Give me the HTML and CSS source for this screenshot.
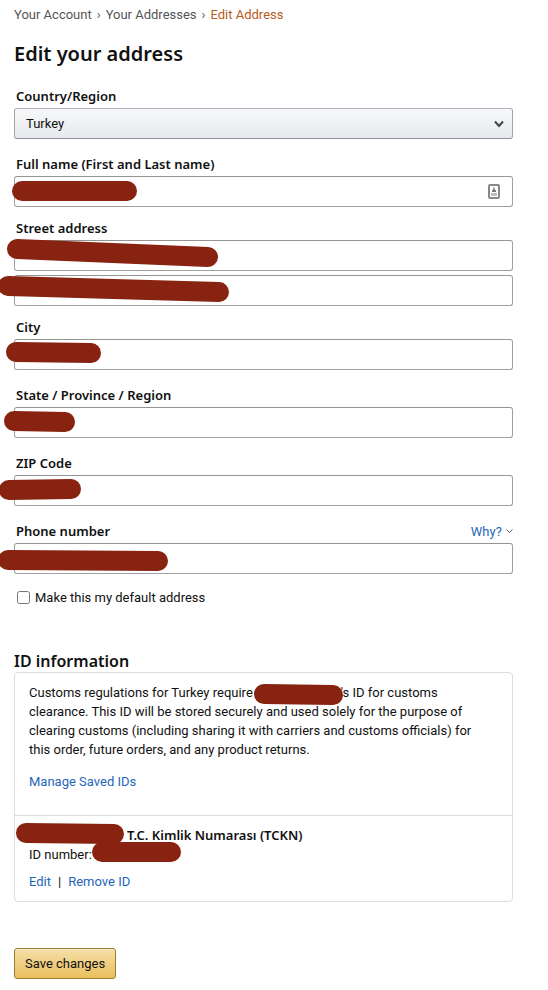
FILE: index.html
```
<!DOCTYPE html>
<html lang="en">
<head>
  <meta charset="UTF-8">
  <meta name="viewport" content="width=device-width, initial-scale=1.0">
  <title>Edit your address</title>
  <link rel="stylesheet" href="styles.css">
</head>
<body>
  <main class="page">
    <nav class="breadcrumb" aria-label="Breadcrumb">
      <a href="#">Your Account</a>
      <span class="separator">›</span>
      <a href="#">Your Addresses</a>
      <span class="separator">›</span>
      <span class="current">Edit Address</span>
    </nav>

    <h1>Edit your address</h1>

    <form>
      <div class="form-group">
        <label for="country">Country/Region</label>
        <div class="field">
          <select id="country" name="country">
            <option>Turkey</option>
          </select>
          <svg class="select-arrow" width="10" height="8" viewBox="0 0 10 8"><path d="M1 1.5L5 6L9 1.5"/></svg>
        </div>
      </div>

      <div class="form-group compact">
        <label for="fullName">Full name (First and Last name)</label>
        <div class="field">
          <input type="text" id="fullName" name="fullName">
          <svg class="contact-icon" width="12" height="16" viewBox="0 0 12 16">
            <rect class="frame" x="1" y="1" width="10" height="13" rx="1"/>
            <path d="M5.500 3H6.500V5L8 6.500V8H4V6.500L5.500 5Z"/>
            <path class="lines" d="M3 9H9V12H3Z"/>
          </svg>
          <svg class="redaction"><line x1="8" y1="15" x2="113" y2="15"/></svg>
        </div>
      </div>

      <div class="form-group compact">
        <label for="street1">Street address</label>
        <div class="field">
          <input type="text" id="street1" name="street1">
          <svg class="redaction"><line x1="3" y1="9" x2="194" y2="17"/></svg>
        </div>
        <div class="field second-line">
          <input type="text" id="street2" name="street2" aria-label="Street address line 2">
          <svg class="redaction"><line x1="-6" y1="11" x2="205" y2="17"/></svg>
        </div>
      </div>

      <div class="form-group">
        <label for="city">City</label>
        <div class="field">
          <input type="text" id="city" name="city">
          <svg class="redaction"><line x1="2" y1="13" x2="77" y2="14"/></svg>
        </div>
      </div>

      <div class="form-group">
        <label for="state">State / Province / Region</label>
        <div class="field">
          <input type="text" id="state" name="state">
          <svg class="redaction"><line x1="0" y1="14" x2="51" y2="15"/></svg>
        </div>
      </div>

      <div class="form-group">
        <label for="zip">ZIP Code</label>
        <div class="field">
          <input type="text" id="zip" name="zip">
          <svg class="redaction"><line x1="-5" y1="15" x2="57" y2="14"/></svg>
        </div>
      </div>

      <div class="form-group">
        <div class="label-row">
          <label for="phone">Phone number</label>
          <a href="#" class="why-link">Why?
            <svg width="7" height="5" viewBox="0 0 7 5"><path d="M0.500 0.500L3.500 3.500L6.500 0.500"/></svg>
          </a>
        </div>
        <div class="field">
          <input type="tel" id="phone" name="phone">
          <svg class="redaction"><line x1="-6" y1="17" x2="144" y2="18"/></svg>
        </div>
      </div>

      <div class="checkbox-row">
        <input type="checkbox" id="defaultAddress" name="defaultAddress">
        <label for="defaultAddress">Make this my default address</label>
      </div>

      <h2>ID information</h2>
      <div class="id-box">
        <section>
          <p>Customs regulations for Turkey require<span class="hidden-name"><svg class="redaction"><line x1="11" y1="7" x2="80" y2="8"/></svg></span>'s ID for customs clearance. This ID will be stored securely and used solely for the purpose of clearing customs (including sharing it with carriers and customs officials) for this order, future orders, and any product returns.</p>
          <a href="#">Manage Saved IDs</a>
        </section>
        <section>
          <div class="id-name">
            <svg class="redaction"><line x1="-3" y1="7" x2="85" y2="8"/></svg>
            <strong>T.C. Kimlik Numarası (TCKN)</strong>
          </div>
          <div class="id-number">ID number:
            <svg class="redaction"><line x1="73" y1="7" x2="142" y2="7"/></svg>
          </div>
          <div class="id-actions">
            <a href="#">Edit</a>
            <span>|</span>
            <a href="#">Remove ID</a>
          </div>
        </section>
      </div>

      <button type="submit">Save changes</button>
    </form>
  </main>
</body>
</html>
```
FILE: styles.css
```
:root {
  --text-color: #111;
  --link-color: #1f66b8;
  --muted-color: #555;
  --accent-color: #b85b22;
  --border-color: #a0a0a0;
  --box-border: #ddd;
  --redaction-color: #882211;
  --heading-font: "Noto Sans", "Open Sans", sans-serif;
}

* {
  box-sizing: border-box;
}

body {
  margin: 0;
  background: white;
  color: var(--text-color);
  font-family: Roboto, "Noto Sans", sans-serif;
  font-size: 13px;
  line-height: 19px;
}

.page {
  padding: 5px 35px 11px 14px;
}

a {
  color: var(--link-color);
  text-decoration: none;
}

a:hover {
  text-decoration: underline;
}

.breadcrumb {
  display: flex;
  gap: 5px;
}

.breadcrumb a,
.separator {
  color: var(--muted-color);
}

.breadcrumb .current {
  color: var(--accent-color);
}

h1,
h2,
strong,
.form-group label {
  font-family: var(--heading-font);
  font-weight: 600;
}

h1 {
  margin: 16px 0 19px;
  font-size: 20px;
  line-height: 28px;
}

.form-group {
  margin-bottom: 16px;
}

.form-group.compact {
  margin-bottom: 12px;
}

.form-group label {
  display: block;
  padding-left: 2px;
  margin-bottom: 2px;
}

.label-row {
  display: flex;
  justify-content: space-between;
}

.why-link svg {
  margin-left: 1px;
  vertical-align: 2px;
  fill: none;
  stroke: #666;
}

.field {
  position: relative;
}

.second-line {
  margin-top: 4px;
}

.field input,
select {
  display: block;
  width: 100%;
  height: 31px;
  padding: 0 11px;
  border: 1px solid var(--border-color);
  border-top-color: #949494;
  border-radius: 3px;
  background: white;
  color: var(--text-color);
  font: inherit;
}

select {
  appearance: none;
  border-color: #adb1b8 #a2a6ac #8d9096;
  background: linear-gradient(to bottom, #f7f8fa, #e7e9ec);
}

.select-arrow {
  position: absolute;
  top: 12px;
  right: 9px;
  fill: none;
  stroke: #444;
  stroke-width: 2;
  pointer-events: none;
}

.contact-icon {
  position: absolute;
  top: 8px;
  right: 13px;
  fill: #777;
}

.contact-icon .frame {
  fill: none;
  stroke: #888;
  stroke-width: 2;
}

.contact-icon .lines {
  fill: #bbb;
}

/* marker strokes over private details */
.redaction {
  position: absolute;
  top: 0;
  left: 0;
  width: 100%;
  height: 100%;
  overflow: visible;
  pointer-events: none;
  stroke: var(--redaction-color);
  stroke-width: 20;
  stroke-linecap: round;
}

.checkbox-row {
  display: flex;
  align-items: center;
  gap: 5px;
  padding-left: 3px;
}

.form-group + .checkbox-row {
  margin-top: -2px;
}

.checkbox-row input {
  width: 13px;
  height: 13px;
  margin: 0;
}

h2 {
  margin: 43px 0 0;
  font-size: 16px;
  line-height: 22px;
}

.id-box {
  border: 1px solid var(--box-border);
  border-radius: 4px;
}

.id-box section {
  padding: 10px 14px;
}

.id-box section:first-child {
  padding-right: 28px;
  padding-bottom: 24px;
  border-bottom: 1px solid var(--box-border);
}

.id-box p {
  margin: 0 0 13px;
}

.hidden-name {
  display: inline-block;
  position: relative;
  width: 88px;
  height: 10px;
}

.id-name,
.id-number {
  position: relative;
}

.id-name {
  padding-left: 98px;
}

.id-actions {
  display: flex;
  gap: 7px;
  margin-top: 8px;
}

button {
  height: 31px;
  margin-top: 46px;
  padding: 0 10px;
  border: 1px solid #9c7e31;
  border-radius: 3px;
  background: linear-gradient(to bottom, #f5dfa9, #eabf5d);
  box-shadow: inset 0 1px 0 rgba(255, 255, 255, 0.4);
  color: var(--text-color);
  font: inherit;
  cursor: pointer;
}
```
